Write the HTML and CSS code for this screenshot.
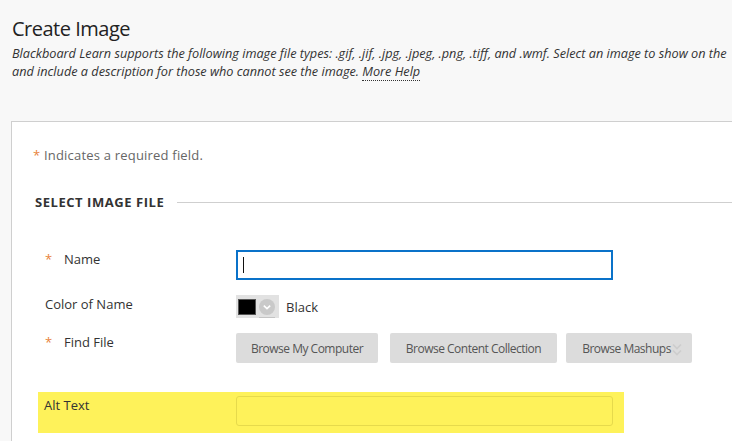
FILE: index.html
```html
<!DOCTYPE html>
<html lang="en">
<head>
<meta charset="utf-8">
<title>Create Image</title>
<link rel="stylesheet" href="styles.css">
</head>
<body>
<div class="page">
  <header class="page-header">
    <h1 class="page-title">Create Image</h1>
    <p class="page-desc">Blackboard Learn supports the following image file types: .gif, .jif, .jpg, .jpeg, .png, .tiff, and .wmf. Select an image to show on the<br>and include a description for those who cannot see the image. <span class="help-link">More Help</span></p>
  </header>

  <main class="panel">
    <p class="required-note"><span class="req">*</span> Indicates a required field.</p>

    <div class="section-head">
      <h2 class="section-title">SELECT IMAGE FILE</h2>
      <span class="section-rule"></span>
    </div>

    <div class="rows">
      <div class="row row-name">
        <div class="label"><span class="req-mark">*</span>Name</div>
        <div class="field"><div class="text-input focused"><span class="caret"></span></div></div>
      </div>

      <div class="row row-color">
        <div class="label"><span class="req-mark blank"></span>Color of Name</div>
        <div class="field color-field">
          <div class="color-picker">
            <span class="swatch"></span>
            <span class="picker-btn">
              <svg width="16" height="16" viewBox="0 0 16 16"><circle cx="8" cy="8" r="8" fill="#c9c9c9"/><path d="M4.8 6.6 L8 9.6 L11.2 6.6" fill="none" stroke="#fff" stroke-width="1.6"/></svg>
            </span>
          </div>
          <span class="color-name">Black</span>
        </div>
      </div>

      <div class="row row-file">
        <div class="label"><span class="req-mark">*</span>Find File</div>
        <div class="field buttons">
          <span class="btn btn-computer">Browse My Computer</span>
          <span class="btn btn-collection">Browse Content Collection</span>
          <span class="btn btn-mashups">Browse Mashups<svg class="dbl-chev" width="10" height="14" viewBox="0 0 10 14"><path d="M1 1.5 L5 5.5 L9 1.5 M1 7.5 L5 11.5 L9 7.5" fill="none" stroke="#cdcdcd" stroke-width="1.6"/></svg></span>
        </div>
      </div>

      <div class="alt-row">
        <div class="alt-label">Alt Text</div>
        <div class="field"><div class="text-input alt-input"></div></div>
      </div>
    </div>
  </main>
</div>
</body>
</html>
```

FILE: styles.css
```css
html, body {
  margin: 0;
  padding: 0;
}
body {
  background: #f8f8f8;
  font-family: "Open Sans", "Liberation Sans", sans-serif;
  color: #333;
  overflow: hidden;
  width: 732px;
  height: 441px;
}
.page {
  width: 732px;
  height: 441px;
  overflow: hidden;
}
.page-header {
  padding: 15px 0 0 12px;
}
.page-title {
  margin: 0;
  font-size: 20px;
  font-weight: 400;
  line-height: 27px;
  letter-spacing: -0.5px;
  color: #222;
}
.page-desc {
  margin: 2px 0 0 0;
  font-size: 12.7px;
  line-height: 18px;
  font-style: italic;
  color: #333;
  white-space: nowrap;
}
.help-link {
  border-bottom: 1px dotted #333;
}
.panel {
  margin: 41px 0 0 11px;
  background: #fff;
  border-left: 1px solid #cfcfcf;
  border-top: 1px solid #cfcfcf;
  padding: 24px 0 40px 0;
  display: flex;
  flex-direction: column;
}
.required-note {
  margin: 0 0 0 21px;
  font-size: 13px;
  line-height: 18px;
  letter-spacing: 0.2px;
  color: #666;
}
.req, .req-mark {
  color: #e8833a;
}
.section-head {
  margin: 29px 0 0 23px;
  display: flex;
  align-items: center;
}
.section-title {
  margin: 0;
  font-size: 13px;
  line-height: 18px;
  font-weight: 700;
  color: #333;
  letter-spacing: 0.55px;
}
.section-rule {
  flex: 1;
  height: 1px;
  background: #cfcfcf;
  margin-left: 13px;
}
.rows {
  margin-top: 39px;
  display: flex;
  flex-direction: column;
}
.row {
  display: grid;
  grid-template-columns: 224px 377px;
}
.row-color { margin-top: 15px; }
.row-file { margin-top: 15px; }
.label {
  padding-left: 33px;
  font-size: 13px;
  line-height: 18px;
  color: #333;
}
.req-mark {
  display: inline-block;
  width: 19px;
}
.req-mark.blank { width: 0; }
.text-input {
  box-sizing: border-box;
  height: 30px;
  width: 377px;
  background: #fff;
  display: flex;
  align-items: center;
}
.text-input.focused {
  border: 2px solid #0a72c9;
  padding-left: 5px;
}
.caret {
  width: 1px;
  height: 16px;
  background: #111;
}
.color-field {
  display: flex;
  align-items: center;
}
.color-picker {
  box-sizing: border-box;
  width: 43px;
  height: 23px;
  background: #e2e2e2;
  display: flex;
  align-items: center;
  padding-left: 2px;
}
.swatch {
  box-sizing: border-box;
  width: 18px;
  height: 16px;
  background: #000;
  border: 1px solid #555;
}
.picker-btn {
  display: flex;
  margin-left: 3px;
  padding-bottom: 2px;
  border-bottom: 1px solid #c4c4c4;
  margin-top: 3px;
}
.color-name {
  margin-left: 7px;
  font-size: 13px;
  color: #333;
}
.buttons {
  display: flex;
}
.btn {
  flex: none;
  box-sizing: border-box;
  height: 30px;
  display: flex;
  align-items: center;
  justify-content: center;
  background: #dcdcdc;
  border-radius: 2px;
  font-size: 12px;
  letter-spacing: -0.5px;
  color: #555;
  white-space: nowrap;
}
.btn-computer { width: 142px; }
.btn-collection { width: 167px; margin-left: 12px; }
.btn-mashups { width: 126px; margin-left: 9px; padding-left: 6px; }
.dbl-chev { margin-left: 1px; margin-top: 3px; }
.alt-row {
  margin: 29px 0 0 26px;
  width: 586px;
  background: #fef25a;
  display: grid;
  grid-template-columns: 198px 377px;
  padding: 4px 0 7px 0;
}
.alt-label {
  padding-left: 6px;
  font-size: 13px;
  line-height: 18px;
  color: #333;
}
.alt-input {
  background: transparent;
  border: 1px solid #e6da4c;
  border-radius: 3px;
}
```
